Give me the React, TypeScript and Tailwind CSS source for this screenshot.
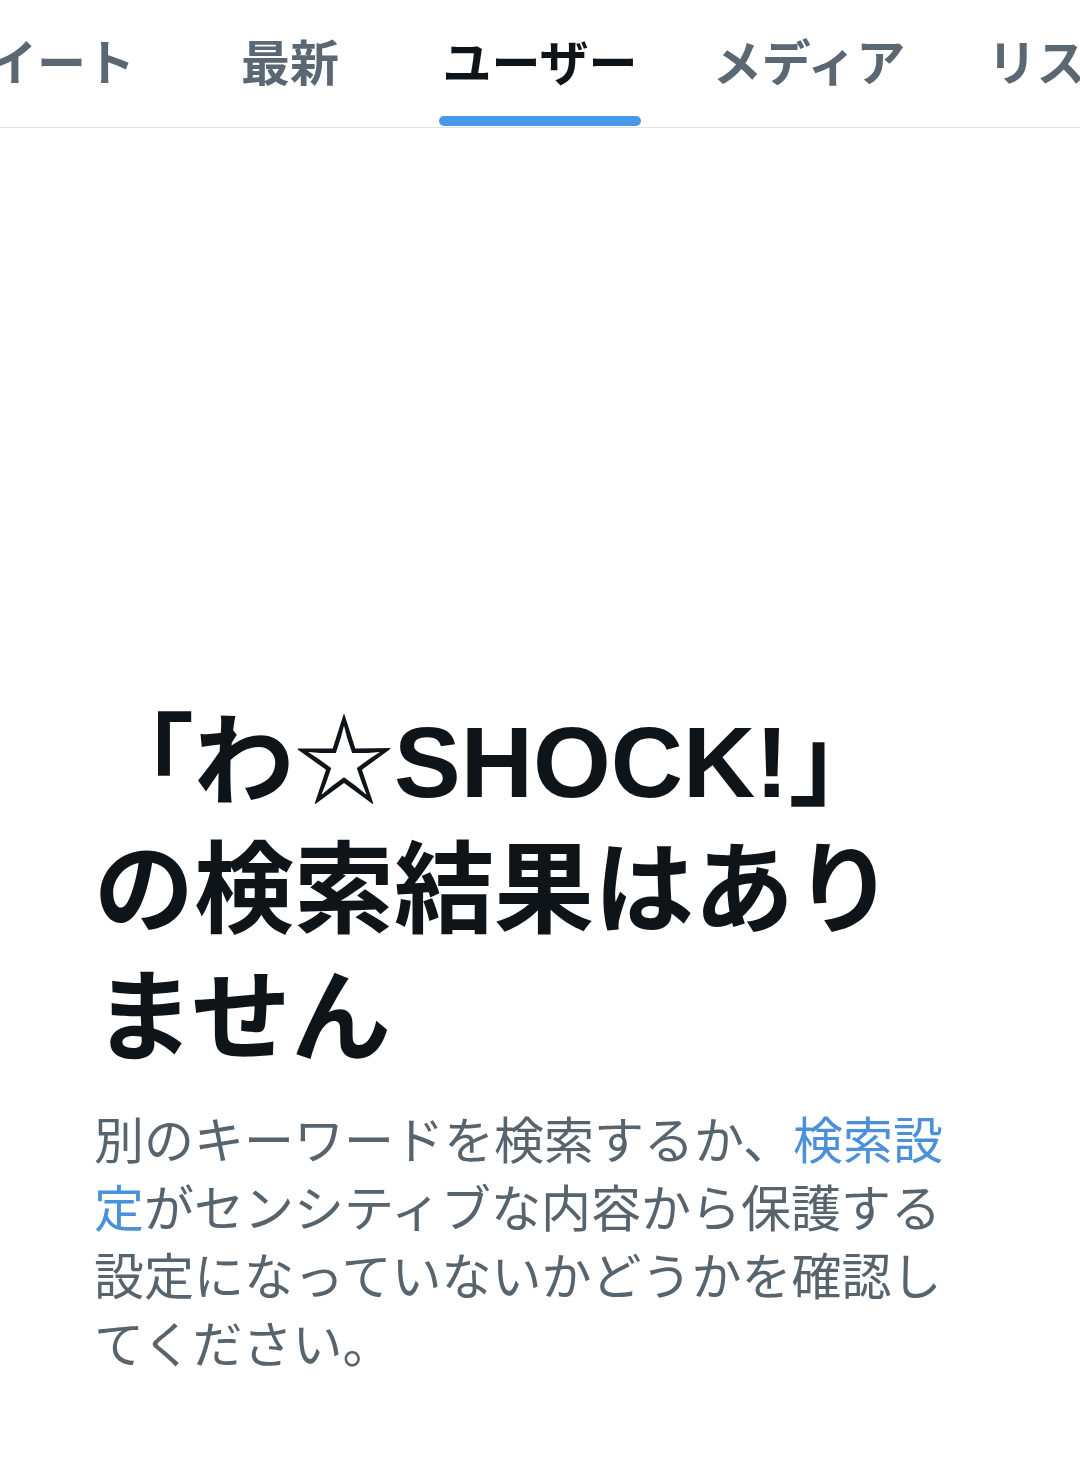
import React from "react";

const tabs = [
  { label: "ツイート", w: "w-[250px]", active: false },
  { label: "最新", w: "w-[256px]", active: false },
  { label: "ユーザー", w: "w-[244px]", active: true },
  { label: "メディア", w: "w-[294px]", active: false },
  { label: "リスト", w: "w-[210px]", active: false },
];

export default function App() {
  return (
    <div
      className="w-[1080px] h-[1458px] bg-white overflow-hidden"
      style={{ fontFamily: '"Liberation Sans", "Noto Sans CJK JP", sans-serif' }}
    >
      <div className="h-[128px] border-b border-[#dde3e8] overflow-hidden">
        <div className="flex h-full -ml-[88px]">
          {tabs.map((t) => (
            <div key={t.label} className={`${t.w} shrink-0 flex justify-center h-full`}>
              <div className="relative flex items-center h-full pt-[2px]">
                <span
                  className={`text-[49px] font-bold leading-none ${
                    t.active ? "text-[#0f1419]" : "text-[#5b6873]"
                  }`}
                >
                  {t.label}
                </span>
                {t.active && (
                  <div className="absolute left-[-3px] right-[-3px] bottom-[1px] h-[10px] rounded-full bg-[#4a99e9]" />
                )}
              </div>
            </div>
          ))}
        </div>
      </div>
      <div className="pl-[94px] pr-[96px] pt-[570px]">
        <h1 className="text-[100px] font-bold leading-[128px] text-[#0f1419] break-all">
          「わ☆SHOCK!」の検索結果はありません
        </h1>
        <p className="mt-[26px] text-[50px] leading-[68px] text-[#57636d] break-all">
          別のキーワードを検索するか、
          <span className="text-[#4a91da]">検索設定</span>
          がセンシティブな内容から保護する設定になっていないかどうかを確認してください。
        </p>
      </div>
    </div>
  );
}
